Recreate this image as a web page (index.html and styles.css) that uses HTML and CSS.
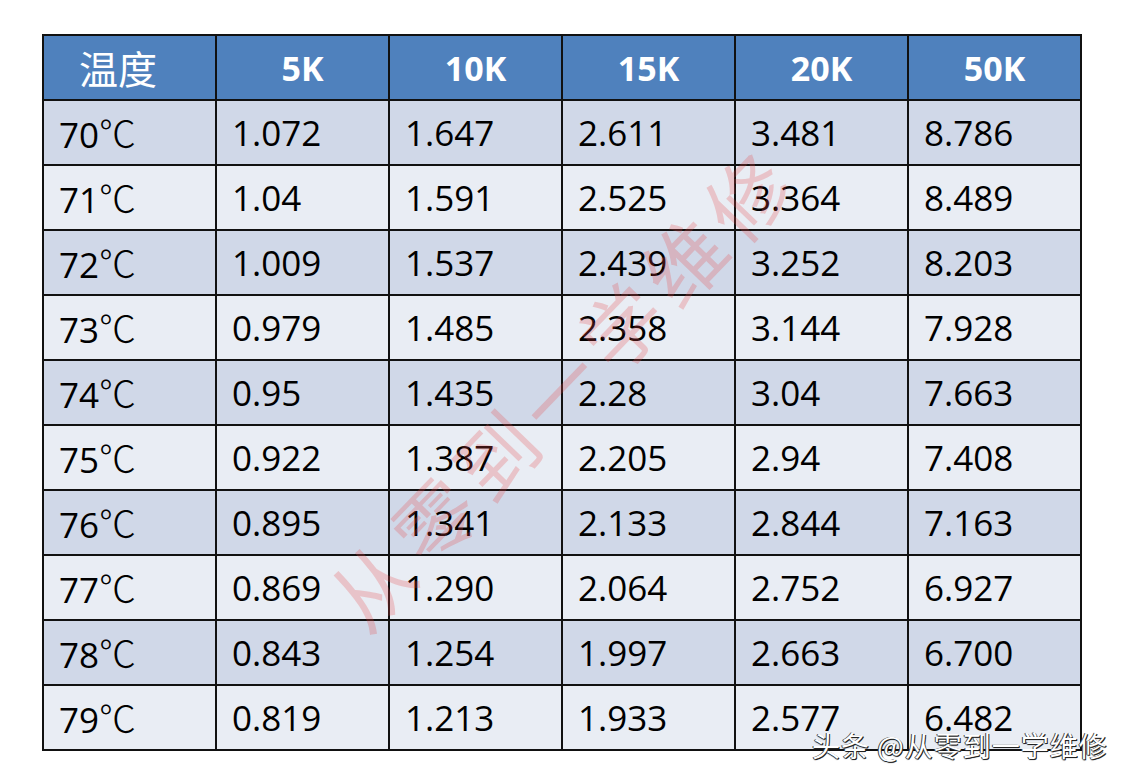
FILE: index.html
```html
<!DOCTYPE html>
<html lang="zh">
<head>
<meta charset="utf-8">
<title>温度 电阻表</title>
<link rel="stylesheet" href="styles.css">
</head>
<body>
<div class="page">
  <table class="ntc">
    <thead>
      <tr>
        <th class="first">温度</th>
        <th>5K</th>
        <th>10K</th>
        <th>15K</th>
        <th>20K</th>
        <th>50K</th>
      </tr>
    </thead>
    <tbody>
      <tr class="dark"><td>70<span class="deg">℃</span></td><td>1.072</td><td>1.647</td><td>2.611</td><td>3.481</td><td>8.786</td></tr>
      <tr class="light"><td>71<span class="deg">℃</span></td><td>1.04</td><td>1.591</td><td>2.525</td><td>3.364</td><td>8.489</td></tr>
      <tr class="dark"><td>72<span class="deg">℃</span></td><td>1.009</td><td>1.537</td><td>2.439</td><td>3.252</td><td>8.203</td></tr>
      <tr class="light"><td>73<span class="deg">℃</span></td><td>0.979</td><td>1.485</td><td>2.358</td><td>3.144</td><td>7.928</td></tr>
      <tr class="dark"><td>74<span class="deg">℃</span></td><td>0.95</td><td>1.435</td><td>2.28</td><td>3.04</td><td>7.663</td></tr>
      <tr class="light"><td>75<span class="deg">℃</span></td><td>0.922</td><td>1.387</td><td>2.205</td><td>2.94</td><td>7.408</td></tr>
      <tr class="dark"><td>76<span class="deg">℃</span></td><td>0.895</td><td>1.341</td><td>2.133</td><td>2.844</td><td>7.163</td></tr>
      <tr class="light"><td>77<span class="deg">℃</span></td><td>0.869</td><td>1.290</td><td>2.064</td><td>2.752</td><td>6.927</td></tr>
      <tr class="dark"><td>78<span class="deg">℃</span></td><td>0.843</td><td>1.254</td><td>1.997</td><td>2.663</td><td>6.700</td></tr>
      <tr class="light"><td>79<span class="deg">℃</span></td><td>0.819</td><td>1.213</td><td>1.933</td><td>2.577</td><td>6.482</td></tr>
    </tbody>
  </table>
  <div class="watermark">从零到一学维修</div>
  <div class="credit">头条 @从零到一学维修</div>
</div>
</body>
</html>
```

FILE: styles.css
```css
html, body {
  margin: 0;
  padding: 0;
  background: #ffffff;
}

.page {
  position: relative;
  width: 1127px;
  height: 784px;
  overflow: hidden;
  padding-top: 34px;
  box-sizing: border-box;
}

.ntc {
  margin-left: 42px;
  width: 1040px;
  table-layout: fixed;
  border-collapse: collapse;
  font-family: "Open Sans", "Noto Sans", sans-serif;
  color: #000;
}

.ntc th,
.ntc td {
  border: 2px solid #111;
  height: 65px;
  padding: 0;
  box-sizing: border-box;
}

.ntc th {
  background: #4f81bd;
  color: #ffffff;
  font-weight: 700;
  font-size: 34px;
  text-align: center;
  line-height: 1;
}

.ntc th.first {
  text-align: left;
  padding-left: 35px;
  font-family: "Noto Sans CJK SC", sans-serif;
  font-weight: 400;
  font-size: 39px;
}

.ntc td {
  font-size: 35px;
  text-align: left;
  padding-left: 15px;
  padding-top: 0;
  line-height: 1;
}

.ntc tr.dark td {
  background: #d0d8e8;
}

.ntc tr.light td {
  background: #e9edf4;
}

.deg {
  font-family: "Noto Sans CJK SC", sans-serif;
  font-weight: 300;
  font-size: 37px;
}

.watermark {
  position: absolute;
  left: 200px;
  top: 345px;
  width: 720px;
  text-align: center;
  transform: rotate(-46deg);
  font-family: "Noto Sans CJK SC", sans-serif;
  font-weight: 400;
  font-size: 80px;
  letter-spacing: 10px;
  color: rgba(232, 70, 70, 0.25);
  line-height: 1;
  white-space: nowrap;
}

.credit {
  position: absolute;
  left: 812px;
  top: 730px;
  font-family: "Noto Sans CJK SC", sans-serif;
  font-size: 28px;
  letter-spacing: 1px;
  color: #ffffff;
  line-height: 1.1;
  white-space: nowrap;
  text-shadow: 1px 1px 0 #222, -1px 0 0 #444, 0 1px 1px #333;
}
```
